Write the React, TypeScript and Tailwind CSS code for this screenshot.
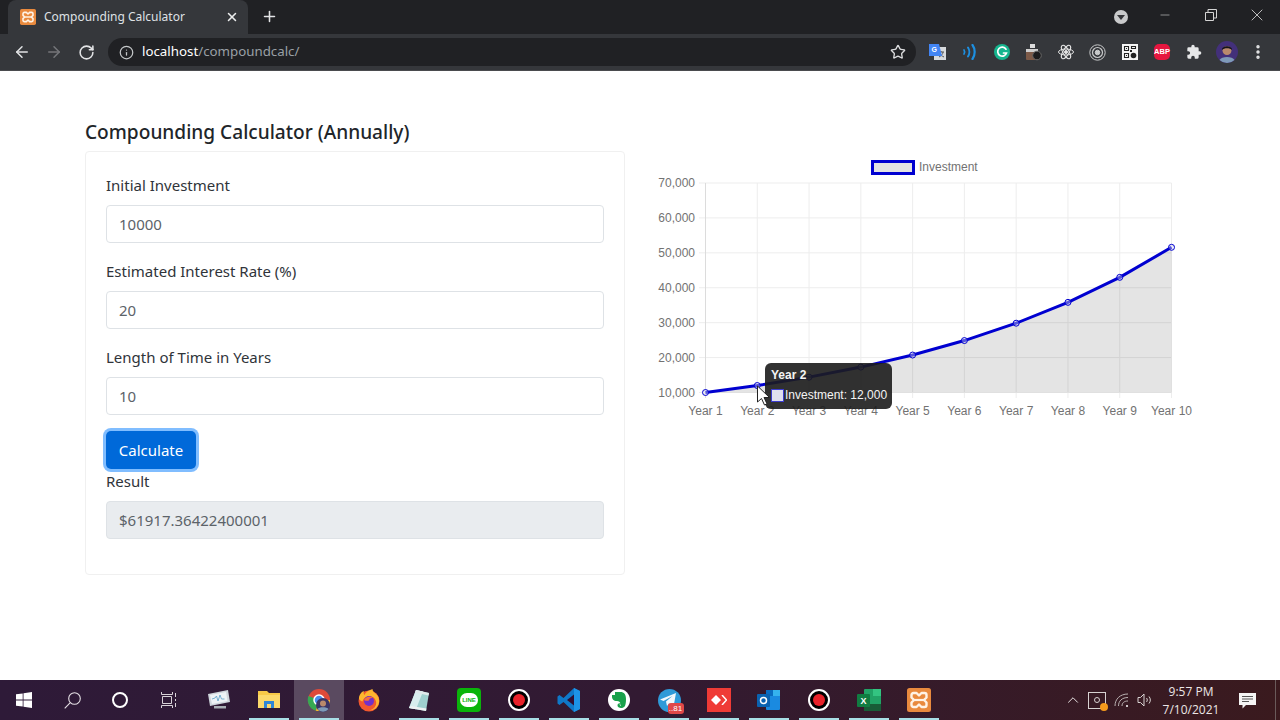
import React from "react";
import { ArrowLeft, ArrowRight, RotateCw, Info, Star, Plus, X, Minus, ChevronUp, EllipsisVertical } from "lucide-react";

const values = [10000, 12000, 14400, 17280, 20736, 24883, 29860, 35832, 42998, 51598];
const px = (i: number) => 705.5 + i * 51.78 - 650;
const py = (v: number) => 392.5 - (v - 10000) * 0.00349 - 150;

function Xampp({ size = 16 }: { size?: number }) {
  return (
    <svg width={size} height={size} viewBox="0 0 24 24">
      <rect width="24" height="24" rx="2.500" fill="#e98a3e" />
      <path
        d="M6.500 5h3l2.500 2.500L14.500 5h3a2 2 0 0 1 2 2v2.500L17 12l2.500 2.500V17a2 2 0 0 1-2 2h-3L12 16.500 9.500 19h-3a2 2 0 0 1-2-2v-2.500L7 12 4.500 9.500V7a2 2 0 0 1 2-2z"
        fill="none"
        stroke="#fff3e6"
        strokeWidth="2.400"
        strokeLinejoin="round"
      />
      <path d="M7 12h10" stroke="#fff3e6" strokeWidth="2.200" />
    </svg>
  );
}

function Chart() {
  const pts = values.map((v, i) => `${px(i)},${py(v)}`).join(" ");
  const labelStyle = { fontFamily: '"Liberation Sans", Arial, sans-serif', fontSize: 12, fill: "#727272" };
  return (
    <div className="relative w-[560px] h-[280px]">
      <svg width="560" height="280" viewBox="0 0 560 280">
        <rect x="222.500" y="11.500" width="41" height="12" fill="#e3e3e3" stroke="#0000d0" strokeWidth="3" />
        <text x="269" y="20.500" style={labelStyle}>Investment</text>
        {[0, 1, 2, 3, 4, 5, 6].map((n) => (
          <g key={n}>
            <line x1="49" x2="521.500" y1={33 + n * 34.92} y2={33 + n * 34.92} stroke="#ededed" />
            <text x="45" y={37 + n * 34.92} textAnchor="end" style={labelStyle}>
              {`${70 - n * 10},000`}
            </text>
          </g>
        ))}
        {values.map((_, i) => (
          <g key={i}>
            <line x1={px(i)} x2={px(i)} y1="33" y2="248" stroke={i === 0 ? "#dcdcdc" : "#ededed"} />
            <text x={px(i)} y="264.500" textAnchor="middle" style={labelStyle}>{`Year ${i + 1}`}</text>
          </g>
        ))}
        <polygon points={`${px(0)},242.500 ${pts} ${px(9)},242.500`} fill="rgba(0,0,0,0.105)" />
        <polyline points={pts} fill="none" stroke="#0000d0" strokeWidth="3" />
        {values.map((v, i) => (
          <circle key={i} cx={px(i)} cy={py(v)} r="3" fill="#d8d8ee" fillOpacity="0.4" stroke="#0000d0" strokeWidth="1" />
        ))}
      </svg>
      <div className="absolute left-[115px] top-[213px] w-[127px] h-[46px] rounded-md bg-[#1c1c1c]/90 text-[#f4f4f4] text-[12px] font-['Liberation_Sans',Arial,sans-serif]">
        <div className="pl-[6px] pt-[5px] leading-[14px] font-bold">Year 2</div>
        <div className="flex items-center pl-[6px] mt-[6px] leading-[14px]">
          <span className="w-[13px] h-[13px] bg-[#dfe0ee] border border-[#3c3cd0]" />
          <span className="ml-[1px] whitespace-nowrap">Investment: 12,000</span>
        </div>
      </div>
      <svg className="absolute left-[106px] top-[235px]" width="16" height="22" viewBox="0 0 16 22">
        <path d="M1.500 1v16l4-3.500 3 6.500 2.500-1.200-3-6.300h5.500z" fill="#fff" stroke="#222" strokeWidth="1" />
      </svg>
    </div>
  );
}

function Field({ label, value }: { label: string; value: string }) {
  return (
    <div className="mb-[16px]">
      <label className="block text-[15px] leading-[24px] mb-[8px] text-[#30343a]">{label}</label>
      <div className="h-[38px] border border-[#dee2e6] rounded-[4px] px-[12px] flex items-center text-[15px] text-[#5c6369]">{value}</div>
    </div>
  );
}

function Ext({ children }: { children: React.ReactNode }) {
  return <div className="w-[32px] h-[32px] flex items-center justify-center">{children}</div>;
}

function Toolbar() {
  return (
    <div className="h-[37px] bg-[#35373b] flex items-center border-b border-[#4a4b4e]">
      <div className="w-[108px] flex items-center text-[#e3e4e6] pl-[13px] shrink-0">
        <ArrowLeft size={18} strokeWidth={2} />
        <ArrowRight size={18} strokeWidth={2} className="ml-[14px] text-[#75767a]" />
        <RotateCw size={17} strokeWidth={2.200} className="ml-[15px]" />
      </div>
      <div className="w-[808px] h-[28px] rounded-full bg-[#202124] flex items-center pl-[11px] pr-[10px] shrink-0">
        <Info size={15} className="text-[#c4c7c9]" />
        <span className="ml-[8px] text-[13.300px] text-white">localhost<span className="text-[#9aa0a6]">/compoundcalc/</span></span>
        <Star size={16} strokeWidth={2} className="ml-auto text-[#dcdddf]" />
      </div>
      <div className="flex items-center ml-[6px]">
        <Ext>
          <svg width="17" height="17" viewBox="0 0 17 17" className="mr-[2px]">
            <rect x="5" y="3" width="12" height="13" fill="#d7dadd" />
            <path d="M9 8h6M12 7v1M10 13c2-1 4-3 4-5M10 9c1 2 3 3 5 4" stroke="#555" strokeWidth="1" fill="none" />
            <path d="M0 0h10l3 12H0z" fill="#4285f4" />
            <text x="2.500" y="8" fontSize="7" fontWeight="700" fill="#fff" fontFamily="Liberation Sans">G</text>
          </svg>
        </Ext>
        <Ext>
          <svg width="16" height="16" viewBox="0 0 16 16" fill="none" stroke="#1d8fe0" strokeLinecap="round">
            <path d="M2 6c.8 1.200.8 2.800 0 4" strokeWidth="1.700" />
            <path d="M6 3.500c1.700 2.500 1.700 6.500 0 9" strokeWidth="2" />
            <path d="M10.500 1c2.900 4 2.900 10 0 14" strokeWidth="2.200" />
          </svg>
        </Ext>
        <Ext>
          <div className="w-[16px] h-[16px] rounded-full bg-[#15b58e] flex items-center justify-center">
            <svg width="12" height="12" viewBox="0 0 12 12" fill="none" stroke="#fff" strokeWidth="1.700" strokeLinecap="round">
              <path d="M10 3.200A4.500 4.500 0 1 0 10.500 7H7.500" />
            </svg>
          </div>
        </Ext>
        <Ext>
          <svg width="16" height="17" viewBox="0 0 16 17">
            <rect x="4" y="0" width="5" height="4" fill="#ddd" />
            <rect x="0" y="5" width="12" height="11" rx="1" fill="#7d5a48" />
            <rect x="0" y="5" width="12" height="3" fill="#cfcfcf" />
            <circle cx="11" cy="11.500" r="4.300" fill="#1c1c1e" stroke="#666" />
          </svg>
        </Ext>
        <Ext>
          <svg width="16" height="16" viewBox="-8 -8 16 16" fill="none" stroke="#e3e3e3" strokeWidth="1">
            <ellipse rx="7.500" ry="3" />
            <ellipse rx="7.500" ry="3" transform="rotate(60)" />
            <ellipse rx="7.500" ry="3" transform="rotate(120)" />
            <circle r="1.500" fill="#e3e3e3" />
          </svg>
        </Ext>
        <Ext>
          <svg width="17" height="17" viewBox="0 0 17 17" fill="none" stroke="#c9cacb" className="mr-[1px]">
            <circle cx="8.500" cy="8.500" r="7.700" />
            <circle cx="8.500" cy="8.500" r="5" strokeWidth="1.200" />
            <circle cx="8.500" cy="8.500" r="2.300" fill="#c9cacb" />
          </svg>
        </Ext>
        <Ext>
          <svg width="16" height="16" viewBox="0 0 16 16">
            <rect width="16" height="16" fill="#f5f5f5" />
            <path d="M2.500 2.500h4v4h-4zM9.500 2.500h4v2h-4zM2.500 9.500h4v4h-4z" fill="none" stroke="#222" strokeWidth="1.100" />
            <path d="M4 4h1v1H4zM4 11h1v1H4zM8 6h2v2H8z" fill="#222" />
            <circle cx="11.500" cy="11.500" r="2.800" fill="#222" />
          </svg>
        </Ext>
        <Ext>
          <div className="w-[16px] h-[16px] rounded-[5px] bg-[#e6163f] flex items-center justify-center text-[7.500px] leading-none font-bold text-white font-['Liberation_Sans',sans-serif]">ABP</div>
        </Ext>
        <Ext>
          <svg width="16" height="16" viewBox="0 0 24 24" fill="#e6e7e8">
            <path d="M20.500 11H19V7a2 2 0 0 0-2-2h-4V3.500a2.500 2.500 0 0 0-5 0V5H4a2 2 0 0 0-2 2v3.800h1.500a2.700 2.700 0 0 1 0 5.400H2V20a2 2 0 0 0 2 2h3.800v-1.500a2.700 2.700 0 0 1 5.400 0V22H17a2 2 0 0 0 2-2v-4h1.500a2.500 2.500 0 0 0 0-5z" />
          </svg>
        </Ext>
        <Ext>
          <svg width="22" height="22" viewBox="0 0 22 22" className="ml-[1px]">
            <circle cx="11" cy="11" r="11" fill="#43307a" />
            <path d="M3.500 19c2-4 13-4 15 0a11 11 0 0 1-15 0z" fill="#7e9ab8" />
            <circle cx="11" cy="9.500" r="4.500" fill="#b98a6c" />
            <path d="M6 9c-.5-5 10.500-5 10 0-2-2.500-8-2.500-10 0z" fill="#15131d" />
          </svg>
        </Ext>
        <Ext>
          <EllipsisVertical size={18} strokeWidth={2.600} className="text-[#e6e7e8]" />
        </Ext>
      </div>
    </div>
  );
}

function TitleBar() {
  return (
    <div className="h-[34px] bg-[#202124] flex items-end text-[#e8eaed]">
      <div className="w-[240px] h-[34px] ml-[8px] bg-[#35373b] rounded-t-[8px] flex items-center pl-[12px] pr-[9px] shrink-0">
        <Xampp size={16} />
        <span className="ml-[8px] text-[12px] text-[#dfe1e5]">Compounding Calculator</span>
        <X size={14} strokeWidth={2.600} className="ml-auto text-[#eceded]" />
      </div>
      <Plus size={17} strokeWidth={2.200} className="ml-[13px] mb-[9px] text-[#e3e4e6]" />
      <div className="ml-auto flex items-center self-start h-[34px]">
        <div className="w-[14px] h-[14px] rounded-full bg-[#c9cacb] flex items-center justify-center mr-[14px]">
          <div className="w-0 h-0 border-l-[4px] border-r-[4px] border-t-[5px] border-l-transparent border-r-transparent border-t-[#35363a]" />
        </div>
        <div className="w-[46px] flex justify-center"><Minus size={14} strokeWidth={1} className="text-[#dcdcdc] mb-[4px]" /></div>
        <div className="w-[46px] flex justify-center">
          <svg width="12" height="12" viewBox="0 0 12 12" fill="none" stroke="#d5d5d5" className="mb-[4px]">
            <path d="M.5 3.500h8v8h-8zM3 3.500V.5h8.500V9H8.500" />
          </svg>
        </div>
        <div className="w-[46px] flex justify-center"><X size={20} strokeWidth={1} className="text-[#dcdcdc] mb-[4px]" /></div>
      </div>
    </div>
  );
}

const under = "after:content-[''] after:absolute after:bottom-0 after:left-[5px] after:right-[5px] after:h-[2px] after:bg-[#a8dfe6]";

function Slot({ children, on = true, active = false }: { children: React.ReactNode; on?: boolean; active?: boolean }) {
  return (
    <div className={`relative w-[50px] h-[40px] flex items-center justify-center shrink-0 ${active ? "bg-[#5a4a60]" : ""} ${on ? under : ""}`}>
      {children}
    </div>
  );
}

function RecIcon() {
  return (
    <div className="w-[22px] h-[22px] rounded-full bg-black border-2 border-white flex items-center justify-center">
      <div className="w-[12px] h-[12px] rounded-full bg-[#e8222a]" />
    </div>
  );
}

function Taskbar() {
  return (
    <div className="h-[40px] bg-gradient-to-r from-[#2e1a38] via-[#321a32] to-[#3a1a1e] flex items-center text-white">
      <div className="w-[48px] flex justify-center shrink-0">
        <svg width="16" height="16" viewBox="0 0 16 16" fill="#fff">
          <path d="M0 2.300l6.700-.9v6.200H0zM7.500 1.300L16 0v7.600H7.500zM0 8.400h6.700v6.200L0 13.700zM7.500 8.400H16V16l-8.500-1.200z" />
        </svg>
      </div>
      <div className="w-[48px] flex justify-center shrink-0">
        <svg width="17" height="17" viewBox="0 0 17 17" fill="none" stroke="#e5e0e5" strokeWidth="1.100">
          <circle cx="10.500" cy="6.500" r="5.800" />
          <path d="M6.300 10.700L.7 16.300" />
        </svg>
      </div>
      <div className="w-[48px] flex justify-center shrink-0">
        <div className="w-[16px] h-[16px] rounded-full border-2 border-white" />
      </div>
      <div className="w-[48px] flex justify-center shrink-0">
        <svg width="17" height="16" viewBox="0 0 17 16" fill="none" stroke="#d8d2d8" strokeWidth="1">
          <path d="M1.500 0v2.500h11V0M1.500 16v-2.500h11V16M2.500 4.500h9v7h-9zM15.500 1v4M15.500 7v2M15.500 11v4" />
        </svg>
      </div>
      <div className="flex items-center ml-[2px]">
        <Slot on={false}>
          <svg width="24" height="22" viewBox="0 0 24 22">
            <path d="M1 5l20-4 2 12-20 4z" fill="#cfd6dc" />
            <path d="M3 6l16-3 1.500 9L5 15z" fill="#eef3f6" />
            <path d="M5 10l3-1 1.500-2 1.500 5 2-6 1.500 4h3" fill="none" stroke="#5aa0c8" strokeWidth=".8" />
            <path d="M7 17h12v2.500H7z" fill="#a9afb5" />
          </svg>
        </Slot>
        <Slot>
          <svg width="22" height="20" viewBox="0 0 22 20">
            <path d="M0 1h9l2 2h11v15H0z" fill="#f7c948" />
            <path d="M0 5h22v13H0z" fill="#fbd96b" />
            <path d="M6 11h10v7h-3v-4H9v4H6z" fill="#2f86d6" />
          </svg>
        </Slot>
        <Slot active>
          <svg width="24" height="24" viewBox="0 0 24 24">
            <circle cx="12" cy="12" r="11" fill="#de4a3a" />
            <path d="M12 12L1.500 8A11 11 0 0 0 9 22.700z" fill="#37a852" />
            <path d="M12 12l-3 10.700A11 11 0 0 0 23 12z" fill="#f6c02e" />
            <circle cx="12" cy="12" r="5" fill="#4a8ef0" stroke="#fff" strokeWidth="1.500" />
            <circle cx="16" cy="17" r="7" fill="#3a3566" />
            <circle cx="16" cy="15.500" r="3" fill="#b98a6c" />
            <path d="M10.500 21c1.500-2.500 9.500-2.500 11 0a7 7 0 0 1-11 0z" fill="#7e9ab8" />
          </svg>
        </Slot>
        <Slot on={false}>
          <svg width="24" height="24" viewBox="0 0 24 24">
            <circle cx="12" cy="13" r="10.500" fill="#f2572e" />
            <path d="M2 11C2 7 4 4 7 3c-.5 1.500-.5 3 .5 4 1-3 5-5 8-6 0 2 1 3 3 4.500 3 2.500 4 6 3.500 9-1 5-5 8-10 8 5-1 8-5 7-9-.8-3.500-4-6-8-5-3 .7-5 2.500-5.500 5C4.500 13.500 3 12.500 2 11z" fill="#fdb72e" />
            <circle cx="12" cy="13" r="5" fill="#7231c9" />
            <path d="M7 12c1-3 6-4.500 9-2-3-.5-4 1-4 2.500-2 .5-3.500 .5-5-.5z" fill="#f6703a" />
          </svg>
        </Slot>
        <Slot>
          <svg width="22" height="24" viewBox="0 0 22 24">
            <path d="M8 2l13 3-3 18L1 20z" fill="#9fd0cf" />
            <path d="M8 2l7 1.600L8 21.200 1 20z" fill="#d8eeee" />
            <path d="M8 2l13 3-.5 2.500L7 4.500z" fill="#dfe8ea" />
            <path d="M1 20l17 3 .5-2.500L3 18z" fill="#eef2f3" />
          </svg>
        </Slot>
        <Slot>
          <div className="w-[24px] h-[24px] rounded-[4px] bg-[#0ab40a] flex items-center justify-center">
            <div className="w-[18px] h-[14px] rounded-[8px] bg-white flex items-center justify-center text-[6px] font-bold text-[#0ab40a] font-['Liberation_Sans',sans-serif]">LINE</div>
          </div>
        </Slot>
        <Slot><RecIcon /></Slot>
        <Slot>
          <svg width="24" height="24" viewBox="0 0 24 24">
            <path d="M17 0l6 3v18l-6 3L6.500 14l-4 3-2-1.500V8.500l2-1.500 4 3z" fill="#0f78c8" />
            <path d="M17 6.500v11L10 12z" fill="#2f0f30" />
            <path d="M17 0l6 3v18l-6 3z" fill="#1d93e6" />
          </svg>
        </Slot>
        <Slot>
          <div className="w-[22px] h-[22px] rounded-full bg-white flex items-center justify-center">
            <svg width="16" height="18" viewBox="0 0 16 18">
              <path d="M4 1h5.500c3.500 0 5.500 2.500 5.500 7 0 7-1.500 9-5 9-2 0-3.500-1-3.500-2.500s1.500-2.500 3-2c-.5-1.500-1.500-2.500-3.500-2.500C2.500 10 1 8 1 5.500V4h3z" fill="#1aa14b" />
              <path d="M10 14.500c-1 0-1.300-.7-.8-1.200" fill="none" stroke="#fff" strokeWidth=".8" />
            </svg>
          </div>
        </Slot>
        <Slot>
          <div className="relative w-[23px] h-[23px] rounded-full bg-[#2f9ad8] flex items-center justify-center">
            <svg width="16" height="14" viewBox="0 0 16 14" className="mr-[2px]"><path d="M0 6.500L16 0l-2.500 14-4.500-3.500-2 2.500-1-4.500 6.500-5.500-9 5z" fill="#f2f8fc" /></svg>
            <div className="absolute left-[10px] top-[14px] w-[16px] h-[11px] rounded-[3px] bg-[#e04848] text-[8px] leading-[11px] text-center text-white font-['Liberation_Sans',sans-serif]">..81</div>
          </div>
        </Slot>
        <Slot>
          <div className="w-[24px] h-[24px] bg-[#ef3b36] flex items-center justify-center">
            <svg width="16" height="10" viewBox="0 0 16 10">
              <path d="M5 0l5 5-5 5-5-5z" fill="#fff" />
              <path d="M11 0l4.500 5L11 10" fill="none" stroke="#fff" strokeWidth="1.500" />
            </svg>
          </div>
        </Slot>
        <Slot>
          <svg width="24" height="22" viewBox="0 0 24 22">
            <rect x="9" y="1" width="14" height="20" rx="1" fill="#1a8ae0" />
            <rect x="9" y="1" width="7" height="6" fill="#0a6cc0" />
            <rect x="16" y="1" width="7" height="6" fill="#35b3ee" />
            <rect x="0" y="5" width="13" height="13" rx="1" fill="#0a62b0" />
            <circle cx="6.500" cy="11.500" r="3" fill="none" stroke="#fff" strokeWidth="1.500" />
          </svg>
        </Slot>
        <Slot><RecIcon /></Slot>
        <Slot>
          <svg width="24" height="22" viewBox="0 0 24 22">
            <rect x="7" y="0" width="17" height="22" rx="1" fill="#21a366" />
            <rect x="16" y="0" width="8" height="7" fill="#33c481" />
            <rect x="7" y="15" width="17" height="7" fill="#185c37" />
            <rect x="0" y="5" width="13" height="13" rx="1" fill="#107c41" />
            <text x="6.500" y="15" fontSize="9" fontWeight="700" textAnchor="middle" fill="#fff" fontFamily="Liberation Sans">X</text>
          </svg>
        </Slot>
        <Slot><Xampp size={24} /></Slot>
      </div>
      <div className="ml-auto flex items-center h-full text-[#ece6e6]">
        <ChevronUp size={18} strokeWidth={1.300} />
        <div className="relative ml-[6px] w-[18px] h-[17px] border border-[#d8d2d2] flex items-center justify-center">
          <div className="w-[6px] h-[6px] rounded-full border border-[#d8d2d2]" />
          <div className="absolute right-[-3px] bottom-[-3px] w-[8px] h-[8px] rounded-full bg-[#f59a1c]" />
        </div>
        <svg width="15" height="14" viewBox="0 0 15 14" fill="none" stroke="#b8b0b0" strokeWidth="1" className="ml-[8px]">
          <path d="M1 13C1 6 6 1 14 1M4.500 13C4.500 8 8 4.500 14 4.500M8 13c0-3 2-5 6-5" />
          <circle cx="13" cy="13" r="1" fill="#fff" stroke="none" />
        </svg>
        <svg width="16" height="14" viewBox="0 0 16 14" fill="none" stroke="#d8d2d2" strokeWidth="1" className="ml-[8px]">
          <path d="M1 4.500h2.500L7 1v12L3.500 9.500H1zM9.500 5c1 1.200 1 2.800 0 4M12 3.500c1.800 2 1.800 5 0 7" />
        </svg>
        <div className="w-[76px] text-center text-[12px] leading-[18px] mt-[1px] font-['Open_Sans',sans-serif]">
          <div>9:57 PM</div>
          <div>7/10/2021</div>
        </div>
        <div className="w-[36px] flex justify-center">
          <svg width="17" height="17" viewBox="0 0 17 17">
            <path d="M0 1h17v12H7l-3.500 3.500V13H0z" fill="#f5f5f5" />
            <path d="M3 4.500h11M3 7h11M3 9.500h7" stroke="#555" strokeWidth="1" />
          </svg>
        </div>
        <div className="w-[5px] h-full border-l border-[#6a5a5a] ml-[10px]" />
      </div>
    </div>
  );
}

export default function App() {
  return (
    <div className="w-[1280px] h-[720px] overflow-hidden flex flex-col bg-white font-['Noto_Sans',sans-serif]">
      <TitleBar />
      <Toolbar />
      <main className="h-[609px] flex pl-[85px]">
        <section className="w-[540px] pt-[48px] shrink-0">
          <h1 className="text-[19.100px] leading-[26px] font-medium text-[#212529] mb-[6px]">Compounding Calculator (Annually)</h1>
          <div className="h-[424px] border border-[#f0f0f0] rounded-[4px] px-[20px] pt-[21px]">
            <Field label="Initial Investment" value="10000" />
            <Field label="Estimated Interest Rate (%)" value="20" />
            <Field label="Length of Time in Years" value="10" />
            <button className="block w-[90px] h-[38px] rounded-[5px] bg-[#0069d9] text-white text-[15px] ring-[3px] ring-[#80bdff]">Calculate</button>
            <div className="text-[15px] leading-[24px] mb-[8px] text-[#30343a]">Result</div>
            <div className="h-[38px] border border-[#dee2e6] bg-[#e9ecef] rounded-[4px] px-[12px] flex items-center text-[15px] text-[#5c6369]">$61917.36422400001</div>
          </div>
        </section>
        <div className="ml-[25px] pt-[79px]">
          <Chart />
        </div>
      </main>
      <Taskbar />
    </div>
  );
}
